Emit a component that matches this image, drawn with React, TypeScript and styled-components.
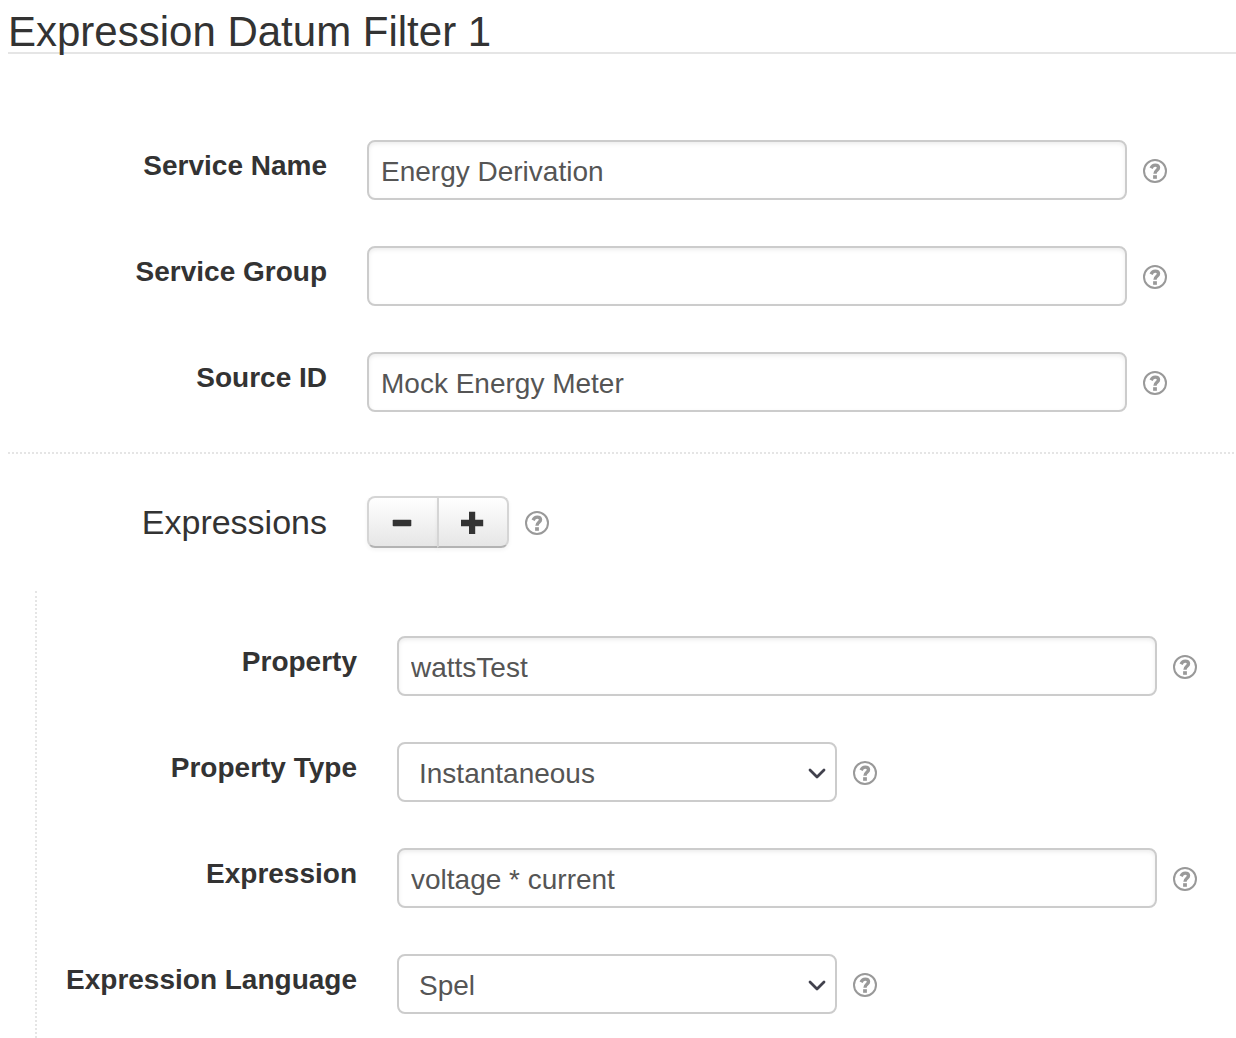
import React, { useId, useState } from 'react';
import styled, { createGlobalStyle } from 'styled-components';

const GlobalStyle = createGlobalStyle`
  *, *::before, *::after { box-sizing: border-box; }
  body {
    margin: 0;
    background: #fff;
    color: #333;
    font-family: "Liberation Sans", Arial, Helvetica, sans-serif;
    font-size: 28px;
    line-height: 40px;
  }
`;

const Page = styled.main`
  padding-left: 8px;
`;

const Title = styled.h1`
  margin: 0;
  padding-top: 12px;
  height: 54px;
  border-bottom: 2px solid #e5e5e5;
  font-size: 42px;
  font-weight: 400;
  line-height: 40px;
`;

const Fields = styled.div`
  display: flex;
  flex-direction: column;
  gap: 46px;
`;

const MainFields = styled(Fields)`
  padding: 86px 0 40px;
`;

const Row = styled.div`
  display: grid;
  grid-template-columns: 319px minmax(0, 1fr);
  column-gap: 40px;
  align-items: start;
`;

const Label = styled.label`
  padding-top: 6px;
  text-align: right;
  font-weight: 700;
`;

const Controls = styled.div`
  display: flex;
  align-items: center;
  gap: 16px;
`;

const TextInput = styled.input`
  flex: 0 1 760px;
  min-width: 0;
  height: 60px;
  margin: 0;
  padding: 4px 12px 0;
  border: 2px solid #ccc;
  border-radius: 8px;
  background: #fff;
  box-shadow: inset 0 2px 4px rgba(0, 0, 0, 0.075);
  color: #555;
  font: inherit;
`;

const SelectBox = styled.div`
  flex: 0 1 440px;
  min-width: 0;
  display: grid;
  align-items: center;

  > * { grid-area: 1 / 1; }
`;

const Select = styled.select`
  appearance: none;
  width: 100%;
  height: 60px;
  margin: 0;
  padding: 4px 48px 0 20px;
  border: 2px solid #ccc;
  border-radius: 8px;
  background: #fff;
  color: #555;
  font: inherit;
`;

const Chevron = styled.svg`
  justify-self: end;
  width: 18px;
  height: 12px;
  margin: 4px 11px 0 0;
  pointer-events: none;
`;

const HelpButton = styled.button`
  display: flex;
  flex: none;
  margin: 0;
  padding: 2px 0 0;
  border: 0;
  background: none;
  color: #999;
  cursor: pointer;
`;

const HelpIcon = styled.svg`
  width: 24px;
  height: 24px;
  fill: none;
  stroke: currentColor;
`;

const ListHeader = styled(Row)`
  margin-right: 2px;
  padding: 42px 0 43px;
  border-top: 2px dotted #e5e5e5;
  align-items: center;
`;

const ListLabel = styled.span`
  text-align: right;
  font-size: 34px;
`;

const ButtonGroup = styled.div`
  display: flex;
`;

const StepButton = styled.button`
  display: flex;
  align-items: center;
  justify-content: center;
  width: 72px;
  height: 52px;
  margin: 0;
  padding: 0;
  border: 2px solid #d5d5d5;
  border-bottom-color: #b3b3b3;
  background: linear-gradient(#fff, #e6e6e6);
  box-shadow: inset 0 2px 0 rgba(255, 255, 255, 0.2), 0 2px 4px rgba(0, 0, 0, 0.05);
  cursor: pointer;

  &:first-child { border-radius: 8px 0 0 8px; }
  &:last-child { margin-left: -2px; border-radius: 0 8px 8px 0; }
`;

const Sign = styled.svg`
  width: 24px;
  height: 24px;
  fill: #333;
`;

const NestedFields = styled(Fields)`
  margin-left: 27px;
  padding: 45px 0 24px 1px;
  border-left: 2px dotted #e5e5e5;
`;

function Help({ topic }: { topic: string }) {
  return (
    <HelpButton type="button" aria-label={`Help: ${topic}`}>
      <HelpIcon viewBox="0 0 24 24" aria-hidden="true">
        <circle cx="12" cy="12" r="11" strokeWidth="2" />
        <path
          d="M8.1 9.2C9 7.2 10.3 6.1 12.2 6.1C14.1 6.1 15.5 7.1 15.5 8.8C15.5 11.4 12 11.3 12 14.8"
          strokeWidth="3.4"
        />
        <path d="M12 16.2v3.6" strokeWidth="3.8" />
      </HelpIcon>
    </HelpButton>
  );
}

function TextField({ label, initial }: { label: string; initial: string }) {
  const id = useId();
  const [value, setValue] = useState(initial);
  return (
    <Row>
      <Label htmlFor={id}>{label}</Label>
      <Controls>
        <TextInput id={id} type="text" value={value} onChange={(e) => setValue(e.target.value)} />
        <Help topic={label} />
      </Controls>
    </Row>
  );
}

function SelectField({ label, options }: { label: string; options: string[] }) {
  const id = useId();
  return (
    <Row>
      <Label htmlFor={id}>{label}</Label>
      <Controls>
        <SelectBox>
          <Select id={id} defaultValue={options[0]}>
            {options.map((option) => (
              <option key={option}>{option}</option>
            ))}
          </Select>
          <Chevron viewBox="0 0 18 12" aria-hidden="true">
            <path d="M2 2 L9 9 L16 2" fill="none" stroke="#41414d" strokeWidth="2.8" strokeLinecap="round" strokeLinejoin="round" />
          </Chevron>
        </SelectBox>
        <Help topic={label} />
      </Controls>
    </Row>
  );
}

export default function App() {
  return (
    <>
      <GlobalStyle />
      <Page>
        <Title>Expression Datum Filter 1</Title>
        <form onSubmit={(e) => e.preventDefault()}>
          <MainFields>
            <TextField label="Service Name" initial="Energy Derivation" />
            <TextField label="Service Group" initial="" />
            <TextField label="Source ID" initial="Mock Energy Meter" />
          </MainFields>
          <ListHeader>
            <ListLabel id="expressions-label">Expressions</ListLabel>
            <Controls>
              <ButtonGroup role="group" aria-labelledby="expressions-label">
                <StepButton type="button" aria-label="Remove expression">
                  <Sign viewBox="0 0 24 24" aria-hidden="true">
                    <rect x="1.7" y="9.7" width="18.6" height="6.6" rx="0.8" />
                  </Sign>
                </StepButton>
                <StepButton type="button" aria-label="Add expression">
                  <Sign viewBox="0 0 24 24" aria-hidden="true">
                    <path d="M8 1.8h6.2v7.9h8v6.6h-8v8H8v-8H0V9.7h8z" />
                  </Sign>
                </StepButton>
              </ButtonGroup>
              <Help topic="Expressions" />
            </Controls>
          </ListHeader>
          <NestedFields>
            <TextField label="Property" initial="wattsTest" />
            <SelectField label="Property Type" options={['Instantaneous']} />
            <TextField label="Expression" initial="voltage * current" />
            <SelectField label="Expression Language" options={['Spel']} />
          </NestedFields>
        </form>
      </Page>
    </>
  );
}
